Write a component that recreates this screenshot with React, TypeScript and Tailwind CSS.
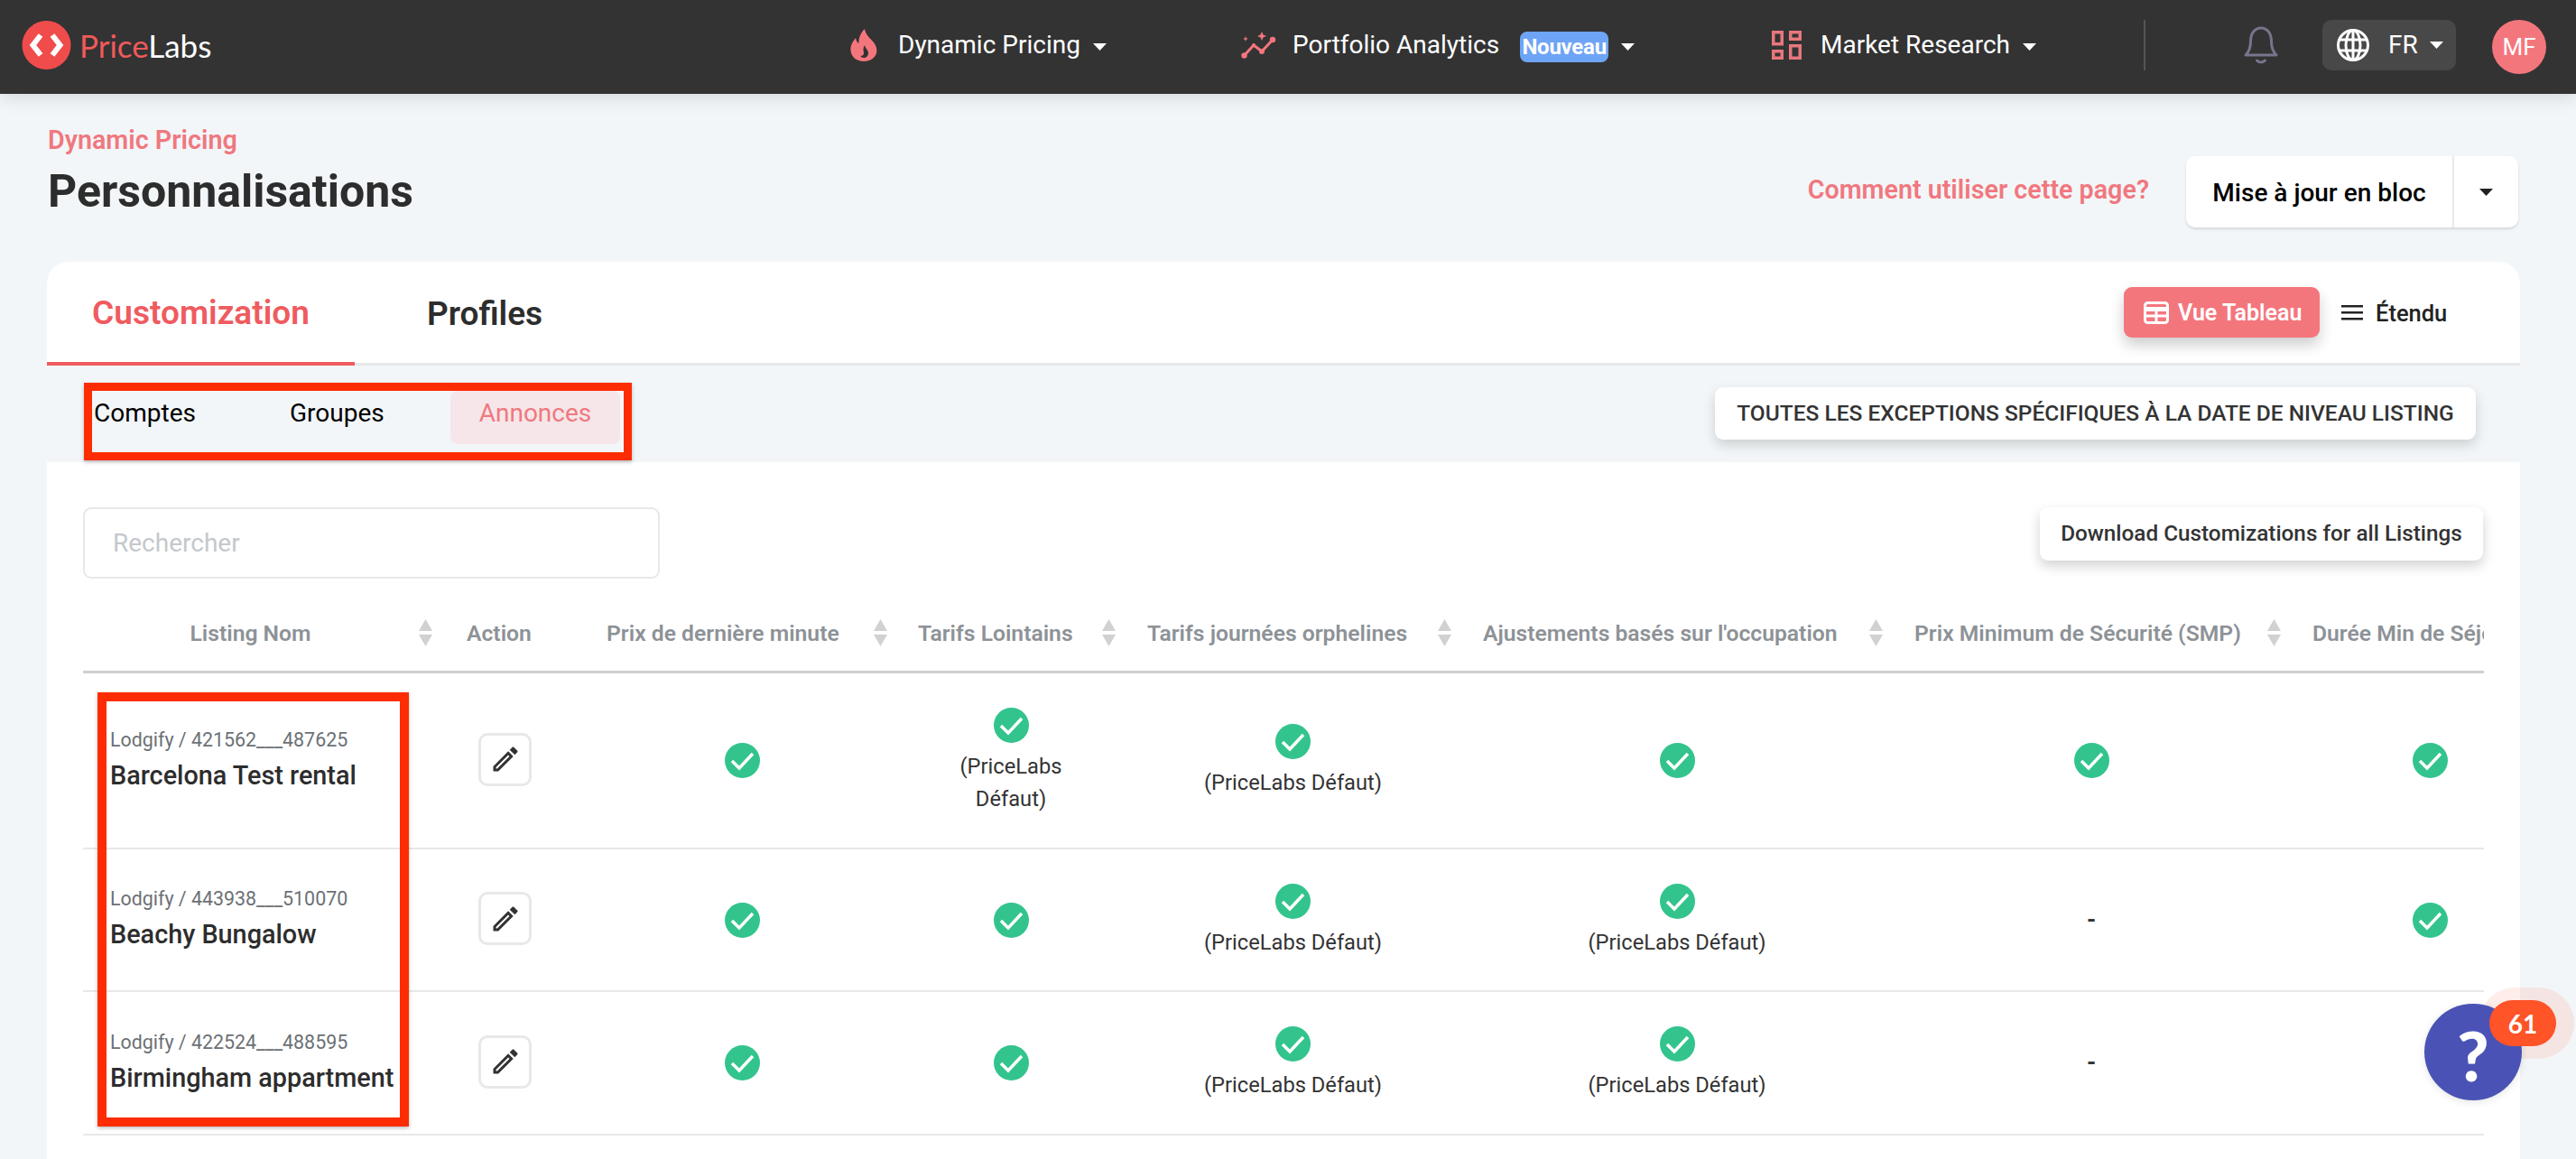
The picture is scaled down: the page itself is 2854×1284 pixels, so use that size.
import { MdOutlineEdit } from "react-icons/md";

const font = "[font-family:Roboto,'Noto_Sans',sans-serif]";

function Caret({ className = "fill-white" }: { className?: string }) {
  return (
    <svg width="15" height="8" viewBox="0 0 15 8" className={className}>
      <polygon points="0,0 15,0 7.5,8" />
    </svg>
  );
}

function Logo() {
  return (
    <svg width="55" height="54" viewBox="0 0 55 54">
      <circle cx="27.5" cy="27" r="27" fill="#f04c4c" />
      <polyline points="21,16 12.5,27 21,38" fill="none" stroke="#fff" strokeWidth="6" />
      <polyline points="34,16 42.5,27 34,38" fill="none" stroke="#fff" strokeWidth="6" />
    </svg>
  );
}

function Flame() {
  return (
    <svg width="30" height="36" viewBox="0 0 30 36">
      <path
        d="M16 0C17 7 22 10 26 15C29 19 30 23 29 27C27.5 32 22 36 15 36C7 36 1 31 .5 24C0 18 3 14 6 10C6.5 13 7.500 15 9.500 16C9 10 12 4 16 0Z"
        fill="#f4767d"
      />
      <path
        d="M16 18C16 21 20 23 20 27C20 30 17.500 32 15 32C12.500 32 12 31 11.500 30C13.500 30 15 29 15 27C15 24 13.500 22 16 18Z"
        fill="#333"
      />
    </svg>
  );
}

function TrendSpark() {
  return (
    <svg width="39" height="30" viewBox="0 0 39 30" fill="#f4767d">
      <polyline points="3.500,26.500 14,15 23,22 35,9" fill="none" stroke="#f4767d" strokeWidth="3" />
      <circle cx="3.500" cy="26.500" r="3.200" />
      <circle cx="14" cy="15" r="2" />
      <circle cx="23" cy="22" r="3" />
      <circle cx="35" cy="9" r="3.200" />
      <path d="M23 0L24.500 3.500L28 5L24.500 6.500L23 10L21.500 6.500L18 5L21.500 3.500Z" />
      <path d="M5 5L5.800 7.200L8 8L5.800 8.800L5 11L4.200 8.800L2 8L4.200 7.200Z" />
    </svg>
  );
}

function MarketIcon() {
  return (
    <svg width="33" height="32" viewBox="0 0 33 32" fill="none" stroke="#e8777d" strokeWidth="3.500">
      <rect x="1.750" y="1.750" width="9.500" height="13" />
      <rect x="1.750" y="22.750" width="9.500" height="7.500" />
      <rect x="20.750" y="1.750" width="10.500" height="7.500" />
      <rect x="20.750" y="16.750" width="10.500" height="13.500" />
    </svg>
  );
}

function BellIcon() {
  return (
    <svg width="38" height="42" viewBox="0 0 38 42" fill="none" stroke="#76758c" strokeWidth="3" strokeLinecap="round" strokeLinejoin="round">
      <path d="M2 32C6 28 7.500 24 7.500 17C7.500 8 12 2 19 2C26 2 30.500 8 30.500 17C30.500 24 32 28 36 32Z" />
      <path d="M14.500 38C16.500 40.500 21.500 40.500 23.500 38" />
    </svg>
  );
}

function GlobeIcon() {
  return (
    <svg width="36" height="36" viewBox="0 0 36 36" fill="none" stroke="#fff" strokeWidth="3">
      <circle cx="18" cy="18" r="16.500" />
      <ellipse cx="18" cy="18" rx="8" ry="16.500" />
      <path d="M18 1.500V34.500M3 12H33M3 24H33" />
    </svg>
  );
}

function TableIcon() {
  return (
    <svg width="28" height="25" viewBox="0 0 28 25" fill="none" stroke="#fff">
      <rect x="1.500" y="1.500" width="25" height="22" rx="3" strokeWidth="3" />
      <path d="M1 8.500H27" strokeWidth="5" />
      <path d="M1 16H27M14 8V24" strokeWidth="3" />
    </svg>
  );
}

function MenuIcon() {
  return (
    <svg width="24" height="18" viewBox="0 0 24 18" fill="#222" className="flex-none">
      <rect y="1" width="24" height="2.500" />
      <rect y="8" width="24" height="2.500" />
      <rect y="15" width="24" height="2.500" />
    </svg>
  );
}

function SortIcon() {
  return (
    <svg width="17" height="30" viewBox="0 0 17 30" fill="#cfd1d3" className="flex-none">
      <polygon points="8.500,0 16,13 1,13" />
      <polygon points="1,17 16,17 8.500,30" />
    </svg>
  );
}

function Check() {
  return (
    <svg width="39" height="39" viewBox="0 0 39 39" className="flex-none">
      <circle cx="19.500" cy="19.500" r="19.500" fill="#33c48d" />
      <polyline points="8,20 16,28 31,12" fill="none" stroke="#fff" strokeWidth="3.500" />
    </svg>
  );
}

function Status({ value }: { value: string }) {
  if (value === "-") {
    return <div className="text-center text-[26px] font-bold text-[#333]">-</div>;
  }
  if (value === "check") {
    return (
      <div className="flex flex-col items-center">
        <Check />
      </div>
    );
  }
  return (
    <div className="flex flex-col items-center pt-[2px]">
      <Check />
      <div className="mt-[8px] text-center text-[23.7px] leading-[36px] text-[#333]">
        {value === "wrap" ? (
          <>
            (PriceLabs
            <br />
            Défaut)
          </>
        ) : (
          "(PriceLabs Défaut)"
        )}
      </div>
    </div>
  );
}

function NavItem({
  icon,
  label,
  gap,
  badge,
}: {
  icon: React.ReactNode;
  label: string;
  gap: string;
  badge?: boolean;
}) {
  return (
    <div className="flex items-center">
      {icon}
      <span className={`text-[28px] text-white whitespace-nowrap ${gap}`}>{label}</span>
      {badge && (
        <span className="ml-[23px] mt-[4px] flex h-[34px] w-[98px] items-center justify-center rounded-[8px] bg-[#6ea4f5] text-[24px] font-bold tracking-[-0.01em] text-white">
          Nouveau
        </span>
      )}
      <span className="ml-[14px] mt-[4px] flex">
        <Caret />
      </span>
    </div>
  );
}

const headers = [
  { label: "Listing Nom", cls: "pr-[10px]", center: true, sort: true },
  { label: "Action", cls: "pl-[27px]", sort: false },
  { label: "Prix de dernière minute", cls: "pl-[22px] pr-[11px]", sort: true },
  { label: "Tarifs Lointains", cls: "pl-[22px] pr-[8px]", sort: true },
  { label: "Tarifs journées orphelines", cls: "pl-[26px] pr-[11px]", sort: true },
  { label: "Ajustements basés sur l'occupation", cls: "pl-[23px] pr-[9px]", sort: true },
  { label: "Prix Minimum de Sécurité (SMP)", cls: "pl-[25px] pr-[10px]", sort: true },
  { label: "Durée Min de Séjour", cls: "pl-[24px]", sort: false },
];

const rows = [
  {
    source: "Lodgify / 421562___487625",
    name: "Barcelona Test rental",
    height: "h-[195px]",
    cells: ["check", "wrap", "default", "check", "check", "check"],
  },
  {
    source: "Lodgify / 443938___510070",
    name: "Beachy Bungalow",
    height: "h-[158px]",
    cells: ["check", "check", "default", "default", "-", "check"],
  },
  {
    source: "Lodgify / 422524___488595",
    name: "Birmingham appartment",
    height: "h-[159px]",
    cells: ["check", "check", "default", "default", "-", "-"],
  },
];

export default function App() {
  return (
    <div className={`relative h-[1284px] w-[2854px] overflow-hidden bg-[#f3f6f8] ${font}`}>
      {/* Navbar */}
      <nav className="relative flex h-[104px] items-center bg-[#333333] pb-[4px] pl-[24px] shadow-[0_4px_20px_rgba(0,0,0,0.12)]">
        <Logo />
        <span className="ml-[9px] w-[144px] text-[35px] leading-none [font-family:Lato,sans-serif]">
          <span className="text-[#f05a5a]">Price</span>
          <span className="text-white">Labs</span>
        </span>
        <div className="ml-[710px] w-[433px]">
          <NavItem icon={<Flame />} label="Dynamic Pricing" gap="ml-[23px]" />
        </div>
        <div className="w-[588px]">
          <NavItem icon={<TrendSpark />} label="Portfolio Analytics" gap="ml-[18px]" badge />
        </div>
        <div className="w-[412px]">
          <NavItem icon={<MarketIcon />} label="Market Research" gap="ml-[21px]" />
        </div>
        <div className="h-[56px] w-[2px] bg-[#555555]" />
        <div className="ml-[109px]">
          <BellIcon />
        </div>
        <div className="ml-[49px] flex h-[56px] w-[148px] items-center rounded-[10px] bg-[#484848] pl-[16px]">
          <GlobeIcon />
          <span className="ml-[21px] w-[46px] text-[28px] text-white">FR</span>
          <Caret />
        </div>
        <div className="ml-[40px] mt-[4px] flex h-[60px] w-[60px] items-center justify-center rounded-full bg-[#f4767d] text-[26px] text-white">
          MF
        </div>
      </nav>

      {/* Page header */}
      <div className="flex h-[186px] items-start justify-between pl-[53px] pr-[64px]">
        <div className="pt-[35px]">
          <div className="text-[28.700px] font-semibold leading-[32px] text-[#f0787f]">Dynamic Pricing</div>
          <h1 className="mt-[13px] text-[50px] font-bold leading-[56px] text-[#2d2d2d]">Personnalisations</h1>
        </div>
        <div className="flex items-center pt-[69px]">
          <span className="pb-[3px] text-[28.700px] font-semibold text-[#f0787f]">Comment utiliser cette page?</span>
          <div className="ml-[41px] flex h-[79px] w-[368px] items-stretch rounded-[10px] bg-white shadow-[0_2px_3px_rgba(0,0,0,0.12)]">
            <div className="flex w-[297px] items-center justify-center border-r-2 border-[#e8eaeb] pt-[2px] text-[28px] font-medium text-black">
              Mise à jour en bloc
            </div>
            <div className="flex flex-1 items-center justify-center">
              <Caret className="fill-[#222]" />
            </div>
          </div>
        </div>
      </div>

      {/* Card */}
      <div className="ml-[52px] h-[1000px] w-[2740px] rounded-t-[24px] bg-white">
        <div className="flex h-[115px] items-stretch border-b-[3px] border-[#e6e8e9] pr-[84px]">
          <div className="flex h-[115px] w-[341px] items-center justify-center border-b-4 border-[#ef5b5f] pt-[3px] text-[37px] font-semibold text-[#ef5b5f]">
            Customization
          </div>
          <div className="ml-[80px] flex items-center pt-[3px] text-[37px] font-semibold text-[#2d2d2d]">Profiles</div>
          <div className="ml-auto flex items-center">
            <div className="flex h-[56px] w-[217px] items-center rounded-[9px] bg-[#f4767d] pl-[22px] text-[25px] font-semibold text-white shadow-[0_8px_16px_rgba(0,0,0,0.2)]">
              <TableIcon />
              <span className="ml-[10px] pt-[2px]">Vue Tableau</span>
            </div>
            <div className="ml-[24px] flex w-[114px] items-center text-[25.500px] font-medium text-[#222]">
              <MenuIcon />
              <span className="ml-[14px] pt-[2px]">Étendu</span>
            </div>
          </div>
        </div>

        {/* Sub tabs */}
        <div className="flex h-[107px] items-start justify-between bg-[#f3f6f8] pl-[52px] pr-[49px]">
          <div className="mt-[28px] flex text-[28px] leading-[50px] text-black">
            <div className="w-[217px]">Comptes</div>
            <div className="w-[178px]">Groupes</div>
            <div className="h-[59px] w-[188px] rounded-[8px] bg-[#f6e6e9] text-center text-[#f0787f]">Annonces</div>
          </div>
          <div className="mt-[24px] flex h-[58px] w-[843px] items-center justify-center rounded-[9px] bg-white text-[24.500px] font-medium text-[#333] shadow-[0_6px_14px_rgba(0,0,0,0.16)]">
            TOUTES LES EXCEPTIONS SPÉCIFIQUES À LA DATE DE NIVEAU LISTING
          </div>
        </div>

        <div className="px-[40px] pt-[50px]">
          <div className="flex items-start justify-between">
            <div className="flex h-[79px] w-[639px] items-center rounded-[9px] border-2 border-[#e6e8e9] pl-[31px] text-[28px] text-[#c4c8cc]">
              Rechercher
            </div>
            <div className="mr-[1px] flex h-[59px] w-[491px] items-center justify-center rounded-[9px] bg-white text-[24.300px] font-medium text-[#333] shadow-[0_6px_14px_rgba(0,0,0,0.18)]">
              Download Customizations for all Listings
            </div>
          </div>

          {/* Table */}
          <div className="mt-[21px] w-[2660px] overflow-hidden">
            <table className="w-[2754px] table-fixed border-separate border-spacing-0">
              <colgroup>
                <col className="w-[398px]" />
                <col className="w-[160px]" />
                <col className="w-[345px]" />
                <col className="w-[250px]" />
                <col className="w-[375px]" />
                <col className="w-[476px]" />
                <col className="w-[442px]" />
                <col className="w-[308px]" />
              </colgroup>
              <thead>
                <tr>
                  {headers.map((h) => (
                    <th key={h.label} className="h-[84px] border-b-[3px] border-[#cdcfd1] p-0 pb-[2px] font-semibold">
                      <div className={`flex items-center justify-between text-[24.700px] text-[#8d9297] ${h.cls}`}>
                        <span className={`whitespace-nowrap ${h.center ? "flex-1 text-center" : "text-left"}`}>{h.label}</span>
                        {h.sort && <SortIcon />}
                      </div>
                    </th>
                  ))}
                </tr>
              </thead>
              <tbody>
                {rows.map((r) => (
                  <tr key={r.name} className={r.height}>
                    <td className="border-b-2 border-[#e6e8e9] pb-[2px] pl-[30px] align-middle">
                      <div className="text-[21.400px] leading-[30px] text-[#6b7075]">{r.source}</div>
                      <div className="mt-[4px] text-[28.800px] font-medium leading-[40px] whitespace-nowrap text-[#2d2d2d]">{r.name}</div>
                    </td>
                    <td className="border-b-2 border-[#e6e8e9] pb-[3px] pl-[40px] align-middle">
                      <div className="flex h-[59px] w-[59px] items-center justify-center rounded-[10px] border-[3px] border-[#e8e8e8] text-[#333]">
                        <MdOutlineEdit size={36} />
                      </div>
                    </td>
                    {r.cells.map((c, i) => (
                      <td key={i} className="border-b-2 border-[#e6e8e9] align-middle">
                        <Status value={c} />
                      </td>
                    ))}
                  </tr>
                ))}
              </tbody>
            </table>
          </div>
        </div>
      </div>

      {/* Annotation boxes drawn over the screenshot */}
      <div className="absolute left-[93px] top-[424px] h-[86px] w-[607px] border-[9px] border-[#fe2c02] shadow-[0_2px_4px_rgba(0,0,0,0.25)]" />
      <div className="absolute left-[108px] top-[767px] h-[481px] w-[345px] border-[10px] border-[#fe2c02] shadow-[0_2px_4px_rgba(0,0,0,0.25)]" />

      {/* Help bubble */}
      <div className="absolute left-[2747px] top-[1094px] h-[79px] w-[105px] rounded-full bg-[#ff5328]/10" />
      <div className="absolute left-[2686px] top-[1112px] flex h-[107px] w-[108px] items-center justify-center rounded-full bg-[#4a53b5] pt-[6px] text-[76px] font-black leading-none text-white shadow-[0_2px_10px_rgba(0,0,0,0.1)] [font-family:Lato,sans-serif]">
        ?
      </div>
      <div className="absolute left-[2758px] top-[1108px] flex h-[51px] w-[74px] items-center justify-center rounded-full bg-[#ff5328] text-[28px] font-bold text-white [font-family:Lato,sans-serif]">
        61
      </div>
    </div>
  );
}
